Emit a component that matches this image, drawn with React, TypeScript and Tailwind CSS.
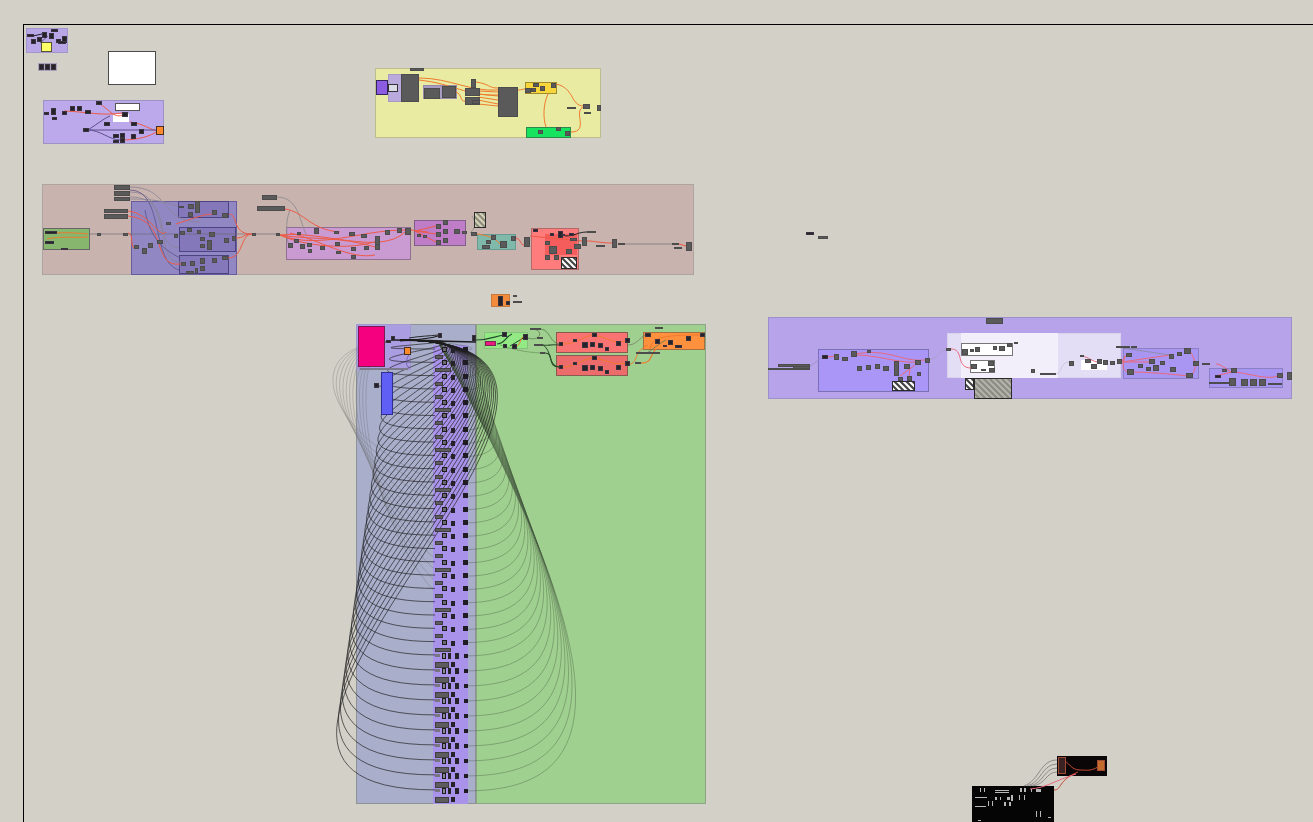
// Node canvas: everything here sits on a free canvas, so groups, nodes and wires are placed from data.
type Box = [number, number, number, number, string?, string?];

const NODE = "#5a5a5a";
const DARK = "#26222a";

const groups: Box[] = [
  [26, 28, 42, 25, "#b8a6e6", "#a396cc"],
  [38, 63, 19, 8, "#a9a0bc", "#a9a0bc"],
  [108, 51, 48, 34, "#ffffff", "#4a4a4a"],
  [43, 100, 121, 44, "#bba9ec", "#9d92c4"],
  [115, 103, 25, 8, "#ffffff", "#555555"],
  [113, 114, 16, 8, "#ffffff", "#ffffff"],
  [375, 68, 226, 70, "#e9eba2", "#bcbc8c"],
  [388, 74, 31, 28, "#b9a9dd", "#a79cc4"],
  [423, 85, 34, 14, "#a89cc2", "#9388ac"],
  [525, 82, 32, 12, "#f7d63c", "#a08a30"],
  [526, 127, 45, 11, "#17e35f", "#2d8a4a"],
  [42, 184, 652, 91, "#c8b3ae", "#aea4a0"],
  [43, 228, 47, 22, "#87b66e", "#666666"],
  [131, 201, 106, 74, "#9087c3", "#675c9c"],
  [178, 201, 51, 17, "#8578ba", "#4b4384"],
  [179, 227, 57, 25, "#8578ba", "#4b4384"],
  [179, 255, 50, 19, "#8578ba", "#4b4384"],
  [286, 227, 125, 33, "#ca9ad2", "#8f7092"],
  [414, 220, 52, 26, "#be7dc6", "#80608a"],
  [477, 234, 39, 16, "#7fb9a9", "#6a9a92"],
  [531, 228, 48, 42, "#ff7c7c", "#b06a6a"],
  [545, 234, 32, 21, "#f55c5c", "#f55c5c"],
  [491, 294, 19, 13, "#f28b3c", "#c87a3c"],
  [356, 324, 120, 480, "#a9aecb", "#8e9296"],
  [476, 324, 230, 480, "#a0d08f", "#8da487"],
  [356, 324, 55, 46, "#ab9de2", "#a09ad0"],
  [433, 345, 35, 459, "#a892ea", "#a892ea"],
  [484, 332, 44, 17, "#93e983", "#86c27c"],
  [556, 332, 72, 21, "#f97373", "#8a5a50"],
  [556, 355, 72, 21, "#ec6b6b", "#8a5a50"],
  [643, 332, 62, 18, "#ff903d", "#a57040"],
  [768, 317, 524, 82, "#b7a3ea", "#9c90c8"],
  [818, 349, 111, 43, "#aa96f6", "#7a70b8"],
  [947, 333, 174, 45, "#e3def5", "#d8d2ec"],
  [961, 333, 97, 45, "#f2effb", "#f2effb"],
  [961, 343, 52, 13, "#ffffff", "#777777"],
  [970, 360, 25, 13, "#ffffff", "#777777"],
  [1123, 348, 76, 31, "#a996f2", "#8a80c4"],
  [1209, 368, 74, 20, "#a996f2", "#8a80c4"],
  [1081, 360, 26, 10, "#ffffff", "#ffffff"],
  [1057, 756, 50, 20, "#0a0608", "#0a0608"],
  [972, 786, 82, 36, "#050505", "#050505"],
];

const solids: Box[] = [
  [41, 42, 11, 10, "#ffff66", "#555533"],
  [358, 326, 27, 41, "#f5007f", "#7a1a50"],
  [360, 368, 48, 2, "#7a7a8a", "#7a7a8a"],
  [381, 372, 12, 43, "#5f5ff6", "#2e2e90"],
  [376, 80, 12, 15, "#8b5ce2", "#33245e"],
  [388, 84, 10, 8, "#dcdce6", "#333333"],
  [485, 341, 11, 5, "#ec1a80", "#7a2a50"],
];

const hatches: Box[] = [
  [474, 212, 12, 16, "#d6d2b8", "#8c8c7c"],
  [561, 257, 16, 12, "#ffffff", "#444444"],
  [892, 381, 23, 10, "#ffffff", "#444444"],
  [965, 378, 9, 12, "#ffffff", "#444444"],
  [974, 378, 38, 21, "#b4b4ac", "#8c8c84"],
];

const greys: Box[] = [
  // yellow group
  [410, 68, 14, 3], [401, 74, 18, 28], [424, 88, 16, 11], [442, 86, 14, 12], [471, 79, 5, 9],
  [465, 88, 15, 8], [465, 97, 15, 8], [472, 100, 8, 4], [498, 87, 20, 30], [525, 88, 6, 5], [533, 83, 6, 4],
  [540, 86, 5, 5], [551, 83, 5, 5], [531, 88, 5, 4], [538, 130, 5, 4], [556, 127, 5, 4], [565, 131, 5, 5],
  [567, 107, 9, 2], [583, 104, 7, 5], [584, 112, 7, 2], [597, 105, 4, 6],
  // brown group, left part
  [114, 185, 16, 5], [114, 191, 16, 5], [114, 197, 16, 4], [104, 209, 24, 4], [104, 214, 24, 5],
  [97, 233, 4, 3], [123, 233, 5, 3], [134, 245, 5, 4], [142, 248, 5, 6], [148, 243, 5, 5], [157, 240, 6, 4],
  [166, 222, 5, 3], [174, 234, 4, 4], [179, 206, 5, 2], [188, 204, 6, 5], [188, 212, 5, 5], [195, 201, 5, 12],
  [212, 210, 5, 5], [222, 213, 6, 5], [180, 231, 5, 4], [187, 228, 5, 4], [197, 230, 4, 4], [209, 232, 6, 5],
  [200, 237, 5, 4], [200, 244, 5, 4], [207, 240, 5, 10], [224, 238, 5, 5], [232, 236, 4, 5],
  [181, 262, 5, 4], [190, 261, 5, 5], [200, 258, 5, 6], [200, 266, 5, 5], [212, 258, 5, 5], [222, 256, 6, 4],
  [186, 271, 8, 3], [195, 268, 3, 5], [262, 195, 15, 5], [257, 206, 28, 5],
  [252, 233, 4, 3], [276, 233, 4, 3],
  // pink-purple group
  [288, 243, 5, 5], [294, 239, 5, 4], [297, 232, 4, 3], [300, 244, 5, 5], [307, 243, 5, 4], [308, 249, 4, 4],
  [314, 228, 5, 6], [320, 246, 5, 4], [334, 231, 5, 3], [335, 242, 5, 4], [349, 232, 6, 4], [361, 234, 6, 4],
  [336, 251, 5, 3], [351, 247, 5, 4], [351, 255, 5, 4], [364, 246, 5, 4], [375, 236, 5, 9], [375, 244, 5, 6],
  [385, 230, 5, 5], [397, 228, 5, 5], [405, 228, 6, 7],
  [436, 224, 5, 5], [443, 220, 5, 5], [436, 232, 5, 5], [443, 229, 5, 5], [436, 240, 5, 5], [443, 238, 5, 5],
  [454, 229, 6, 5], [417, 234, 4, 3], [423, 235, 4, 3], [462, 231, 5, 3], [471, 232, 6, 4],
  // teal and red
  [491, 235, 5, 5], [486, 240, 5, 4], [482, 245, 8, 4], [500, 241, 7, 7], [511, 236, 5, 5],
  [524, 237, 6, 10], [545, 241, 5, 4], [549, 246, 8, 8], [545, 255, 5, 5], [554, 255, 5, 5], [566, 249, 6, 5],
  [570, 238, 7, 3], [574, 244, 7, 5], [582, 237, 5, 9], [587, 231, 9, 2], [596, 245, 9, 2], [612, 239, 5, 9],
  [618, 243, 7, 2], [672, 243, 7, 2], [674, 247, 8, 2], [686, 242, 6, 9],
  // right purple group
  [986, 318, 17, 6], [778, 364, 32, 3], [768, 368, 42, 2], [793, 366, 17, 3], [834, 354, 5, 6], [842, 357, 6, 4],
  [851, 351, 6, 6], [867, 350, 4, 3], [857, 366, 5, 5], [866, 365, 5, 5], [875, 364, 5, 5], [883, 366, 6, 5],
  [894, 361, 5, 15], [904, 364, 6, 5], [915, 360, 6, 5], [925, 358, 5, 5], [917, 372, 4, 4], [898, 377, 5, 4], [907, 376, 5, 5],
  [946, 348, 5, 3], [962, 349, 6, 6], [970, 349, 4, 3], [975, 347, 5, 5], [993, 346, 4, 4], [999, 346, 6, 5],
  [1007, 343, 5, 4], [1014, 342, 4, 2], [1031, 369, 4, 4], [1040, 373, 16, 2],
  [971, 364, 6, 5], [981, 369, 5, 2], [988, 361, 6, 5], [989, 368, 6, 4], [1069, 361, 5, 5], [1080, 355, 4, 2],
  [1085, 359, 6, 4], [1091, 364, 6, 5], [1097, 359, 5, 5], [1103, 360, 5, 5], [1110, 361, 5, 4], [1117, 359, 5, 5],
  [1116, 346, 14, 2], [1131, 346, 6, 2], [1126, 353, 6, 4], [1127, 369, 7, 6], [1138, 364, 5, 4], [1146, 367, 5, 4], [1149, 359, 6, 5],
  [1153, 365, 6, 6], [1160, 361, 5, 4], [1170, 367, 6, 5], [1169, 354, 5, 5], [1177, 352, 5, 4], [1184, 348, 7, 6],
  [1193, 361, 6, 5], [1186, 373, 7, 5], [1202, 363, 8, 2], [1222, 369, 5, 3], [1231, 368, 6, 5], [1229, 378, 7, 8],
  [1241, 379, 7, 7], [1250, 379, 7, 7], [1259, 379, 7, 7], [1277, 373, 6, 5], [1209, 382, 20, 2], [1268, 383, 14, 2], [1287, 372, 5, 8],
  [818, 236, 10, 3],
  // small bits over the green group
  [530, 328, 11, 2], [537, 337, 6, 2], [534, 344, 9, 2], [540, 352, 5, 2], [636, 352, 24, 2], [655, 327, 8, 2], [635, 362, 6, 2],
  [513, 295, 4, 2], [513, 301, 9, 2],
];

const darks: Box[] = [
  [27, 34, 7, 3], [42, 32, 5, 6], [37, 37, 5, 5], [49, 33, 5, 6], [31, 39, 5, 5], [51, 29, 7, 3],
  [56, 39, 5, 4], [62, 36, 5, 7], [58, 41, 8, 3], [39, 64, 5, 6], [45, 64, 5, 6], [51, 64, 5, 6],
  [44, 112, 5, 3], [51, 108, 5, 7], [52, 117, 5, 3], [62, 111, 5, 4], [70, 106, 5, 5], [77, 106, 5, 5],
  [85, 110, 6, 4], [96, 101, 6, 4], [104, 122, 6, 4], [83, 128, 6, 4], [122, 112, 6, 5], [131, 122, 6, 4],
  [113, 134, 6, 4], [120, 133, 5, 5], [113, 140, 6, 3], [120, 138, 5, 5], [131, 134, 5, 5], [139, 129, 5, 5],
  [45, 231, 12, 3], [45, 241, 9, 3], [61, 248, 7, 2], [806, 232, 8, 3],
  [822, 355, 6, 4], [1215, 375, 6, 3], [550, 233, 4, 3], [558, 231, 5, 7], [561, 234, 4, 2],
  [569, 233, 5, 3], [533, 229, 5, 3], [498, 296, 5, 10], [506, 301, 4, 4],
  [391, 336, 4, 5], [386, 340, 5, 3], [438, 333, 4, 5], [472, 335, 4, 7],
  [502, 332, 5, 5], [503, 344, 4, 4], [512, 344, 5, 5], [523, 334, 5, 6],
  [559, 342, 4, 4], [573, 339, 4, 3], [592, 333, 5, 4], [582, 342, 6, 6], [590, 342, 5, 5], [598, 343, 5, 5], [605, 347, 4, 4], [616, 341, 5, 5], [625, 338, 5, 5],
  [559, 365, 4, 4], [573, 362, 4, 3], [592, 356, 5, 4], [582, 365, 6, 6], [590, 365, 5, 5], [598, 366, 5, 5], [605, 370, 4, 4], [616, 365, 5, 5], [625, 361, 5, 5],
  [645, 333, 6, 4], [655, 339, 5, 5], [668, 340, 5, 5], [686, 336, 5, 5], [700, 333, 5, 4], [675, 345, 7, 3], [663, 345, 4, 1],
  [374, 383, 5, 5],
];

const blackBits: Box[] = [
  [980, 788, 1, 4], [984, 788, 1, 4], [995, 790, 14, 1], [995, 792, 14, 1], [975, 797, 12, 1], [995, 797, 2, 3], [1000, 797, 1, 3],
  [1020, 788, 2, 4], [1024, 788, 2, 4], [1031, 789, 1, 3], [1036, 789, 5, 3], [1019, 795, 1, 5], [1024, 795, 1, 5], [1007, 797, 3, 3],
  [1011, 795, 2, 6], [1004, 802, 2, 4], [1009, 802, 2, 4], [975, 806, 11, 1], [988, 801, 1, 5], [992, 801, 1, 5],
  [1036, 811, 1, 6], [1040, 811, 1, 6], [1048, 817, 3, 1], [978, 820, 3, 1],
];

const orange = "#ef7a2e";
const red = "#ee5a46";
const rose = "#e9697c";

// [colour, width, path]
const wires: [string, number, string][] = [
  [orange, 1, "M419 78 C450 78 470 92 498 90"], [orange, 1, "M419 80 C455 84 465 96 498 95"],
  [orange, 1, "M478 91 L498 92 M478 94 L498 96 M478 97 L498 100 M478 100 L498 104 M478 104 L498 106"],
  [orange, 1, "M476 82 C490 84 488 88 498 88"], [orange, 1, "M456 92 C462 94 460 102 465 101"],
  [orange, 1, "M518 90 C522 90 522 89 525 89"], [orange, 1, "M548 94 C543 105 543 118 546 127"],
  [orange, 1, "M556 84 C575 88 570 106 584 106"], [orange, 1, "M571 132 C590 132 572 110 584 107"],
  [orange, 1, "M45 233 C60 233 70 232 88 234"], [orange, 1, "M47 239 C60 236 70 238 88 237"],
  ["#6f6a78", 0.7, "M90 234 L252 234"],
  ["#8a8496", 0.8, "M130 187 C170 187 160 222 200 222"], ["#8a8496", 0.8, "M130 192 C170 192 150 244 179 248"],
  ["#8a8496", 0.8, "M130 197 C180 197 150 262 181 262"], ["#8a8496", 0.8, "M130 199 C165 199 170 205 178 206"],
  ["#5c5488", 0.8, "M130 190 C165 190 150 262 179 270"], ["#5c5488", 0.8, "M145 210 C150 240 165 250 180 258"],
  [red, 1, "M128 211 C150 213 160 240 166 232"], [red, 1, "M128 216 C170 220 150 268 181 264"],
  [red, 1, "M128 233 C134 234 130 246 134 248"], [red, 1, "M176 224 C200 216 205 214 215 214"],
  [red, 1, "M229 214 C238 214 232 233 250 234"], [red, 1, "M236 238 C244 238 244 234 252 234"],
  [red, 1, "M228 258 C244 258 240 234 252 234"], ["#6f6a78", 0.7, "M256 234 L276 234"],
  ["#8d8d8d", 0.9, "M277 197 C300 197 300 225 307 236"], ["#8d8d8d", 0.9, "M290 210 C286 220 286 228 288 243"],
  [red, 1, "M285 209 C305 212 310 230 340 232"], [red, 1, "M280 235 C320 230 380 256 405 232"],
  [red, 1, "M280 235 C320 250 360 230 405 230"], [red, 1, "M280 235 C300 245 350 252 380 240"],
  [red, 1, "M280 235 C310 240 340 236 375 247"], [red, 1, "M290 233 C320 240 350 260 375 255"],
  [red, 1, "M411 230 L428 232 M415 231 L436 226 M415 231 L436 234 M415 231 L436 242"],
  ["#8d8d8d", 0.8, "M470 233 C476 228 476 222 472 216"], [orange, 1, "M477 234 C490 236 495 238 500 244"],
  [red, 1, "M516 238 C522 240 520 245 524 245"], [red, 1, "M530 236 L582 241"],
  [red, 1, "M587 241 C595 241 600 243 612 243"], ["#6f6a78", 0.7, "M625 244 L672 244"], [red, 1, "M679 244 L686 246"],
  ["#222", 1, "M565 236 C575 236 578 232 587 232"],
  [red, 1, "M64 111 C90 112 100 116 122 113"], [red, 1, "M100 104 C110 110 115 120 124 114"], [red, 1, "M130 122 C145 124 150 130 158 131"],
  [red, 1, "M120 140 C140 140 150 136 158 131"], ["#5c4f8a", 1, "M88 130 C100 130 110 140 120 140"],
  ["#5c4f8a", 1, "M88 130 C100 122 105 118 110 116"], ["#5c4f8a", 1, "M88 130 L158 130"],
  ["#22202a", 1, "M33 36 L42 34"], ["#6b5a8a", 1, "M40 43 L48 36"],
  ["#9a8ec0", 0.8, "M810 366 C820 360 822 356 825 356"], [rose, 1.2, "M828 357 C835 356 835 356 838 356"],
  [rose, 1, "M855 354 C890 348 900 362 925 360"], [rose, 1, "M855 355 C880 355 900 364 918 362"],
  [rose, 1, "M900 376 L915 365"], [rose, 1, "M909 376 L910 370"], ["#a8a0cc", 0.8, "M928 360 C940 358 938 350 947 350"],
  [rose, 1, "M950 349 C965 348 955 368 971 368"], ["#c8c4d8", 0.8, "M1056 374 C1062 374 1060 362 1069 362"],
  [rose, 1, "M1082 356 C1090 358 1090 360 1097 362"], [rose, 1, "M1122 361 L1127 354 M1122 362 L1170 355 M1122 362 L1150 362"],
  [rose, 1, "M1127 372 C1150 372 1170 374 1188 376"], [rose, 1, "M1189 350 C1198 362 1196 372 1190 376"],
  [rose, 1, "M1125 356 C1122 365 1122 372 1130 372"], [rose, 1, "M1216 364 C1222 364 1226 370 1232 372"],
  [rose, 1, "M1215 376 L1232 372"], [rose, 1, "M1236 372 C1250 374 1268 380 1278 376"],
  ["#8a8a9a", 0.8, "M1116 347 L1170 355"],
  ["#1f4d2a", 1.2, "M476 340 C490 340 495 336 504 335"], ["#1f4d2a", 1.2, "M497 344 C505 344 505 337 512 334"],
  ["#1f4d2a", 1, "M510 346 L525 337"], [orange, 1, "M517 346 C521 344 520 338 523 337"],
  ["#5b7c50", 0.8, "M528 338 C540 342 545 330 532 329"], ["#5b7c50", 0.8, "M541 329 C550 330 550 343 559 344"],
  ["#2a4d2a", 1.2, "M543 345 C550 346 548 344 559 345"], ["#2a4d2a", 1.2, "M545 353 C555 353 546 366 559 367"],
  ["#2a4d2a", 1, "M543 345 C552 350 548 366 559 367"], ["#6f9a60", 0.8, "M500 345 C515 350 525 352 540 353"],
  ["#7a7a68", 0.8, "M628 345 C636 345 640 338 645 335"], ["#5b7c50", 0.8, "M666 340 C655 346 650 352 648 352"],
  [orange, 1.2, "M641 363 C652 364 650 354 656 349"], [orange, 1, "M563 344 C575 344 580 338 592 335 C605 336 615 345 625 341"],
  [orange, 1, "M563 367 C575 367 580 360 592 358 C605 359 615 366 625 363"], [orange, 1, "M650 349 C652 338 660 335 700 335"],
  [orange, 1, "M628 365 C640 362 632 352 648 345"],
  ["#1c1c1c", 1.4, "M395 340 L476 342"], ["#1c1c1c", 1.2, "M400 341 C410 340 425 340 438 336"], ["#1c1c1c", 0.9, "M409 338 C420 336 430 336 438 335"],
  ["#6a5aa8", 0.8, "M411 351 C405 360 405 366 410 368"], ["#444", 0.8, "M379 386 C384 386 380 390 384 392"],
  ["#c24a32", 1, "M1054 790 C1062 790 1058 780 1078 772"], [rose, 1, "M1030 789 C1046 788 1056 780 1076 774"],
  ["#c24a32", 1, "M1062 760 C1070 762 1070 770 1080 770 C1088 770 1092 772 1102 764"],
  ["#7a7a7a", 0.8, "M1024 786 C1040 780 1040 760 1057 760"], ["#7a7a7a", 0.8, "M1027 786 C1042 782 1042 764 1057 764"],
  ["#7a7a7a", 0.8, "M1030 786 C1044 783 1044 768 1057 768"], ["#7a7a7a", 0.8, "M1033 786 C1046 784 1046 772 1057 772"],
];

// the repeated column: tighter rows above, wider ones towards the bottom
const upperRows = 23;
const lowerRows = 10;
const rowYs = [
  ...Array.from({ length: upperRows }, (_, i) => 349 + i * 13.3),
  ...Array.from({ length: lowerRows }, (_, i) => 349 + upperRows * 13.3 + i * 15),
];

function Rect({ b, cls }: { b: Box; cls?: string }) {
  const [x, y, w, h, bg, bd] = b;
  return (
    <div
      className={cls ?? "absolute border"}
      style={{ left: x, top: y, width: w, height: h, backgroundColor: bg, borderColor: bd }}
    />
  );
}

function Hatch({ b }: { b: Box }) {
  const [x, y, w, h, bg, line] = b;
  return (
    <svg className="absolute" style={{ left: x, top: y }} width={w} height={h}>
      <rect width={w} height={h} fill={bg} />
      {Array.from({ length: Math.ceil((w + h) / 6) + 1 }, (_, i) => (
        <line key={i} x1={i * 6 - h} y1={0} x2={i * 6} y2={h} stroke={line} strokeWidth={2.2} />
      ))}
      <rect x={0.5} y={0.5} width={w - 1} height={h - 1} fill="none" stroke="#2a2a2a" />
    </svg>
  );
}

function UpperRow({ wide }: { wide: boolean }) {
  return (
    <div className="relative h-[13.3px] shrink-0">
      <div className="flex items-start pl-[7px]">
        <div className="h-[5px] w-[5px] border border-[#1c1c1c] bg-[#6a6770]" />
        <div className="ml-[4px] mt-[1px] h-[5px] w-[4px] bg-[#26222a]" />
        <div className="ml-[8px] h-[5px] w-[5px] bg-[#1e1c22]" />
      </div>
      <div className={`mt-[2px] h-[4px] border border-[#3f3f3f] bg-[#5d5b5d] ${wide ? "w-[16px]" : "w-[8px]"}`} />
    </div>
  );
}

function LowerRow() {
  return (
    <div className="flex h-[15px] shrink-0 flex-col gap-[3px]">
      <div className="flex items-center gap-[2px]">
        <div className="h-[3px] w-[5px] bg-[#77757f]" />
        <div className="h-[6px] w-[4px] border border-[#1c1c1c] bg-[#8a8794]" />
        <div className="h-[6px] w-[4px] bg-[#26222a]" />
        <div className="ml-[2px] h-[6px] w-[4px] bg-[#26222a]" />
        <div className="ml-[3px] h-[4px] w-[4px] bg-[#1e1c22]" />
      </div>
      <div className="flex items-center gap-[2px]">
        <div className="h-[6px] w-[14px] border border-[#3f3f3f] bg-[#5d5b5d]" />
        <div className="h-[5px] w-[4px] bg-[#26222a]" />
      </div>
    </div>
  );
}

export default function App() {
  return (
    <div className="relative h-[822px] w-[1313px] overflow-hidden bg-[#d3d0c8] blur-[0.5px]">
      <div className="ml-[23px] mt-[24px] h-[798px] border-l border-t border-black" />

      {groups.map((b, i) => <Rect key={i} b={b} />)}

      <svg className="absolute left-0 top-0" width={1313} height={822} fill="none">
        {/* sweeping wires of the repeated column */}
        {Array.from({ length: 11 }, (_, i) => (
          <path key={i} d={`M388 342 C${298 + i * 5} 346 ${322 + i * 4} ${430 + i * 8} 433 ${480 + i * 11}`} stroke="#6b6b6b" strokeOpacity={0.55} strokeWidth={0.6} />
        ))}
        {rowYs.map((y, i) => {
          const k = y - 340;
          return <path key={i} d={`M466 ${y + 1} C${470 + k * 0.28} ${y + 1} ${480 + k * 0.35} ${y - k * 0.2} 438 342`} stroke="#465a40" strokeOpacity={0.65} strokeWidth={0.6} />;
        })}
        {rowYs.map((y, i) => {
          const d = 130 + (y - 340) * 0.43;
          return <path key={i} d={`M400 340 C${400 + d} 340 ${433 - d} ${y} 435 ${y}`} stroke="#1e1e1e" strokeOpacity={0.85} strokeWidth={0.8} />;
        })}
        {wires.map(([c, w, d], i) => <path key={i} d={d} stroke={c} strokeWidth={w} />)}
      </svg>

      {solids.map((b, i) => <Rect key={i} b={b} />)}
      {hatches.map((b, i) => <Hatch key={i} b={b} />)}
      {greys.map((b, i) => <Rect key={i} b={[b[0], b[1], b[2], b[3], NODE, "#4c4c4c"]} />)}
      {darks.map((b, i) => <Rect key={i} b={[b[0], b[1], b[2], b[3], DARK, "#3a3440"]} />)}
      {blackBits.map((b, i) => <Rect key={i} cls="absolute" b={[b[0], b[1], b[2], b[3], "#b8b8b8"]} />)}

      {/* node rows of the column sit in normal flow inside their group */}
      <div className="absolute left-[435px] top-[347px] flex w-[33px] flex-col">
        {Array.from({ length: upperRows }, (_, i) => <UpperRow key={i} wide={i % 3 === 1} />)}
        {Array.from({ length: lowerRows }, (_, i) => <LowerRow key={i} />)}
      </div>

      {/* orange component and the black cluster's nodes */}
      <Rect b={[404, 347, 7, 8, "#ff8a2e", "#44301c"]} />
      <Rect b={[156, 126, 8, 9, "#ff8a2e", "#44301c"]} />
      <Rect b={[1058, 757, 8, 17, "#3a2222", "#a04a34"]} />
      <Rect b={[1097, 760, 8, 11, "#c46a2e", "#a04a34"]} />
    </div>
  );
}
